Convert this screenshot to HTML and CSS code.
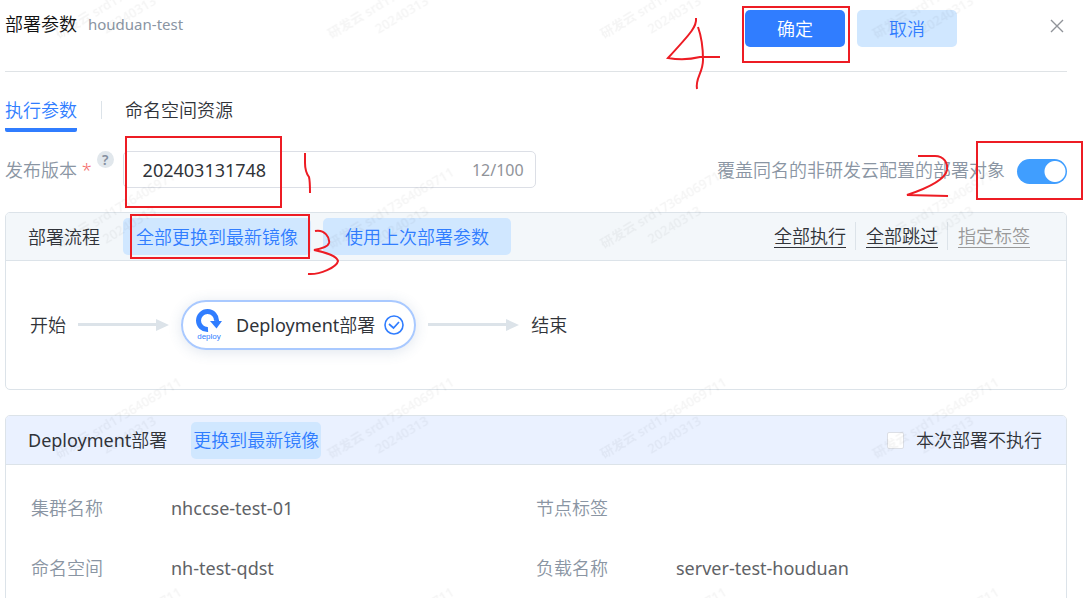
FILE: index.html
```html
<!DOCTYPE html>
<html lang="zh-CN">
<head>
<meta charset="utf-8">
<meta name="viewport" content="width=device-width, initial-scale=1">
<title>部署参数</title>
<link rel="stylesheet" href="styles.css">
</head>
<body>
<main class="dialog">
  <header class="dialog-head">
    <h1 class="dialog-title">部署参数</h1>
    <span class="dialog-sub">houduan-test</span>
    <div class="dialog-actions">
      <button class="btn btn-primary" type="button">确定</button>
      <button class="btn btn-soft" type="button">取消</button>
    </div>
    <button class="close" type="button" aria-label="关闭">
      <svg width="14" height="14" viewBox="0 0 14 14"><path d="M1 1L13 13M13 1L1 13" fill="none" stroke="#909399" stroke-width="1.4"/></svg>
    </button>
  </header>

  <nav class="tabs">
    <a class="tab tab-active" href="#params">执行参数</a>
    <a class="tab" href="#resources">命名空间资源</a>
  </nav>

  <section class="form-row" id="params">
    <label class="form-label" for="version">发布版本 <span class="required">*</span></label>
    <span class="help">?</span>
    <div class="field">
      <input class="field-input" id="version" type="text" value="202403131748" maxlength="100">
      <span class="field-count">12/100</span>
    </div>
    <label class="switch-label" for="override">覆盖同名的非研发云配置的部署对象</label>
    <input class="switch" id="override" type="checkbox" role="switch" checked>
  </section>

  <section class="panel">
    <div class="panel-head">
      <h2 class="panel-title">部署流程</h2>
      <button class="btn btn-soft btn-all" type="button">全部更换到最新镜像</button>
      <button class="btn btn-soft btn-last" type="button">使用上次部署参数</button>
      <div class="links">
        <a class="link" href="#run">全部执行</a>
        <a class="link" href="#skip">全部跳过</a>
        <a class="link link-muted" href="#tag">指定标签</a>
      </div>
    </div>
    <div class="flow">
      <span>开始</span>
      <svg class="arrow" width="91" height="14" viewBox="0 0 91 14"><path d="M0 5H78V1L91 7L78 13V8H0Z" fill="#dce3e9"/></svg>
      <div class="node">
        <svg class="node-logo" width="26" height="32" viewBox="0 0 26 32">
          <path d="M12 20.500A9 9 0 1 1 20.500 12" fill="none" stroke="#307dff" stroke-width="5"/>
          <path d="M14 12H26L20.500 19.500Z" fill="#307dff"/>
          <text class="node-logo-text" x="13" y="30" text-anchor="middle">deploy</text>
        </svg>
        <span><span class="latin">Deployment</span>部署</span>
        <svg class="node-check" width="20" height="20" viewBox="0 0 20 20"><circle cx="10" cy="10" r="9" fill="none" stroke="#307dff" stroke-width="1.600"/><path d="M5 9L9.500 13L15 7" fill="none" stroke="#307dff" stroke-width="1.700"/></svg>
      </div>
      <svg class="arrow" width="91" height="14" viewBox="0 0 91 14"><path d="M0 5H78V1L91 7L78 13V8H0Z" fill="#dce3e9"/></svg>
      <span>结束</span>
    </div>
  </section>

  <section class="panel">
    <div class="panel-head panel-head-blue">
      <h2 class="panel-title"><span class="latin">Deployment</span>部署</h2>
      <button class="btn btn-soft btn-one" type="button">更换到最新镜像</button>
      <label class="skip"><input class="skip-box" type="checkbox">本次部署不执行</label>
    </div>
    <dl class="details">
      <div class="detail"><dt>集群名称</dt><dd>nhccse-test-01</dd></div>
      <div class="detail"><dt>节点标签</dt><dd></dd></div>
      <div class="detail"><dt>命名空间</dt><dd>nh-test-qdst</dd></div>
      <div class="detail"><dt>负载名称</dt><dd>server-test-houduan</dd></div>
    </dl>
  </section>
</main>

<svg class="watermark" aria-hidden="true">
  <defs>
    <pattern id="mark" x="36" y="-50" width="272.500" height="210" patternUnits="userSpaceOnUse">
      <g class="mark-text" transform="translate(23 89) rotate(-31)">
        <text x="0" y="0">研发云 srd17364069711</text>
        <text x="43" y="20">20240313</text>
      </g>
    </pattern>
  </defs>
  <rect width="100%" height="100%" fill="url(#mark)"/>
</svg>

<svg class="notes" width="1089" height="598" viewBox="0 0 1089 598" aria-hidden="true">
  <rect x="126" y="137" width="155" height="70"/>
  <rect x="977" y="142" width="105" height="57"/>
  <rect x="131" y="215" width="178" height="43"/>
  <rect x="743" y="7" width="106" height="55"/>
  <path d="M305 153V163C305 169 306 173 309 177C310 181 310 187 310 193"/>
  <path d="M918 156H935C944 156 948 163 947 170C945 180 928 188 907 195L948 196"/>
  <path d="M315 231C325 229 330 238 329 243C328 247 320 249 314 250C324 252 337 256 338 261C337 267 320 275 308 274"/>
  <path d="M696 18C697 26 692 32 668 58C680 60 692 59 700 57H720M698 27C702 38 703 50 703 60C703 73 695 78 697 89"/>
</svg>
</body>
</html>
```
FILE: styles.css
```css
* { box-sizing: border-box; }

body {
  margin: 0;
  background: #fff;
  color: #303339;
  font-family: "Noto Sans", "Noto Sans CJK SC", sans-serif;
  font-size: 18px;
  font-weight: 350;
  line-height: 24px;
  overflow: hidden;
}

button, input { font: inherit; color: inherit; }
h1, h2, dl, dd { margin: 0; font: inherit; }
.latin { font-weight: 400; }

.dialog { padding: 0 22px 0 5px; }

.dialog-head {
  display: flex;
  align-items: flex-start;
  height: 72px;
  padding-top: 10px;
  border-bottom: 1px solid #dfe3e6;
}
.dialog-title { padding-top: 2px; color: #111; }
.dialog-sub { margin-left: 11px; padding-top: 2px; color: #8a95a3; font-size: 15px; font-weight: 400; }
.dialog-actions { display: flex; gap: 12px; margin-left: auto; }

.btn {
  height: 37px;
  min-width: 100px;
  padding: 0;
  border: 0;
  border-radius: 5px;
  white-space: nowrap;
}
.btn-primary { background: #307dff; color: #fff; }
.btn-soft { background: #d0e7ff; color: #307dff; }

.close {
  display: flex;
  margin: 9px 3px 0 93px;
  padding: 0;
  border: 0;
  background: none;
}

.tabs { display: flex; margin-top: 26px; }
.tab { position: relative; color: #303339; text-decoration: none; height: 34px; }
.tab + .tab { margin-left: 24px; padding-left: 24px; }
.tab + .tab::before {
  content: "";
  position: absolute;
  left: 0;
  top: 3px;
  height: 18px;
  border-left: 1px solid #dce3e9;
}
.tab-active { color: #307dff; border-bottom: 4px solid #307dff; border-radius: 2px; }

.form-row { display: flex; align-items: center; margin-top: 19px; height: 37px; }
.form-label { color: #8a95a3; white-space: nowrap; }
.required { color: #f56c6c; }
.help {
  width: 17px;
  height: 17px;
  margin: 0 9px 20px 5px;
  border-radius: 50%;
  background: #e1e7ec;
  color: #8590a0;
  font-size: 14px;
  font-weight: 600;
  line-height: 17px;
  text-align: center;
}
.field {
  display: flex;
  align-items: center;
  width: 413px;
  height: 37px;
  padding: 0 11px 0 19px;
  border: 1px solid #dcdfe6;
  border-radius: 5px;
  font-weight: 400;
}
.field-input { flex: 1; min-width: 0; padding: 0; border: 0; outline: 0; background: none; }
.field-count { color: #909399; font-size: 16px; }
.switch-label { margin-left: auto; color: #8a95a3; white-space: nowrap; }
.switch {
  appearance: none;
  width: 50px;
  height: 25px;
  margin: 3px 0 0 12px;
  border-radius: 13px;
  background: radial-gradient(circle at 38px 50%, #fff 10px, #409eff 11px);
}

.panel { margin-top: 24px; border: 1px solid #dce3e9; border-radius: 5px; overflow: hidden; }
.panel + .panel { margin-top: 25px; }
.panel-head {
  display: flex;
  align-items: center;
  height: 48px;
  padding: 0 36px 0 22px;
  border-bottom: 1px solid #dce3e9;
  background: #f3f7fa;
}
.panel-head-blue { height: 49px; background: #eaf1ff; padding-right: 24px; }
.panel-title { white-space: nowrap; }
.btn-all { width: 188px; margin-left: 23px; }
.btn-last { width: 188px; margin-left: 12px; }
.btn-one { width: 130px; margin-left: 24px; }

.links { display: flex; align-items: center; margin-left: auto; }
.link { color: #303339; line-height: 22px; text-decoration: none; border-bottom: 1px solid; }
.link-muted { color: #999; }
.link + .link { position: relative; margin-left: 20px; }
.link + .link::before {
  content: "";
  position: absolute;
  left: -11px;
  top: -3px;
  height: 28px;
  border-left: 1px solid #dce3e9;
}

.flow { display: flex; align-items: center; gap: 12px; height: 128px; padding-left: 24px; }
.node {
  display: flex;
  align-items: center;
  height: 50px;
  padding: 0 10px 0 13px;
  border: 2px solid #a9c9ff;
  border-radius: 25px;
  box-shadow: 0 2px 14px rgba(60, 100, 150, 0.160);
}
.node-logo { margin-right: 14px; }
.node-check { margin-left: 9px; }
.node-logo-text { font: 8px "Liberation Sans", sans-serif; fill: #307dff; }

.details { display: grid; grid-template-columns: 505px 1fr; row-gap: 36px; padding: 31px 0 36px 25px; }
.detail { display: flex; }
.detail dt { width: 140px; color: #8a95a3; }
.detail dd { color: #606266; font-weight: 400; }

.skip { display: flex; align-items: center; gap: 12px; margin-left: auto; }
.skip-box {
  appearance: none;
  width: 17px;
  height: 17px;
  margin: 0;
  border: 1px solid #dcdfe6;
  border-radius: 2px;
  background: #fff;
}

.watermark { position: fixed; inset: 0; width: 100%; height: 100%; pointer-events: none; }
.mark-text { font: 600 13px "Noto Sans", "Noto Sans CJK SC", sans-serif; fill: #000; fill-opacity: 0.040; }
.notes { position: absolute; left: 0; top: 0; fill: none; stroke: #ed1c24; stroke-width: 2; pointer-events: none; }
```
